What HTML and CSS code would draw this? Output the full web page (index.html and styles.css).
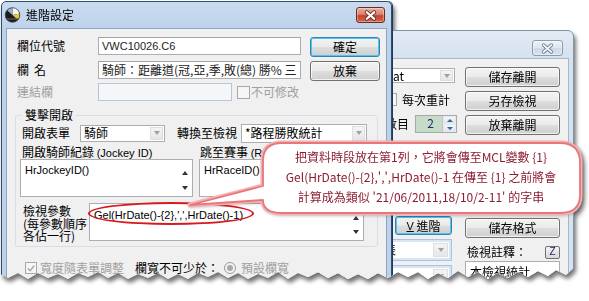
FILE: index.html
```html
<!DOCTYPE html>
<html lang="zh-Hant">
<head>
<meta charset="utf-8">
<title>進階設定</title>
<link rel="stylesheet" href="styles.css">
</head>
<body>
<div class="paper">
  <div class="desk">
    <div class="win back">
      <div class="titlebar back-title">
        <span class="close inactive">
          <svg width="30" height="15" viewBox="0 0 30 15"><path d="M11 4 L19 11 M19 4 L11 11" stroke="#6d7c8e" stroke-width="3.6" stroke-linecap="round"/><path d="M11 4 L19 11 M19 4 L11 11" stroke="#f4f7fb" stroke-width="2" stroke-linecap="round"/></svg>
        </span>
      </div>
      <div class="client back-client">
        <div class="bcol bleft">
          <div class="combo bcombo"><span class="ctext">at</span><span class="arrow"><i></i></span></div>
          <div class="bcheck"><span class="cbox"></span><span>每次重計</span></div>
          <div class="bspin"><span>數目</span><div class="spin"><span class="spinval">2</span><span class="spinbtns"><b class="up"></b><b class="dn"></b></span></div></div>
          <div class="btn vbtn"><u>V</u>&nbsp;進階</div>
          <div class="combo bcombo2"><span class="ctext">表</span><span class="arrow"><i></i></span></div>
          <div class="combo bcombo2"><span class="ctext"></span><span class="arrow"><i></i></span></div>
        </div>
        <div class="bcol bright">
          <div class="btn bbtn">儲存離開</div>
          <div class="btn bbtn">另存檢視</div>
          <div class="btn bbtn">放棄離開</div>
          <div class="btn bbtn fmt">儲存格式</div>
          <div class="noterow"><span>檢視註釋：</span><span class="zbtn">Z</span></div>
          <div class="textarea notearea"><span>本檢視統計</span><span class="sb"><i class="tri-up"></i></span></div>
        </div>
      </div>
    </div>

    <div class="win front">
      <div class="titlebar">
        <svg class="appicon" width="17" height="16" viewBox="0 0 17 16">
          <circle cx="8.5" cy="8" r="7.3" fill="#1c1c1c"/>
          <path d="M8.5 8 L8.5 0.7 A7.3 7.3 0 0 1 15.6 6.4 Z" fill="#f7f7f7"/>
          <path d="M8.5 8 L15.6 6.4 A7.3 7.3 0 0 1 13.8 13 Z" fill="#e8c43a"/>
          <path d="M8.5 8 L3 3.2 A7.3 7.3 0 0 1 8.5 0.7 Z" fill="#8fb6d8"/>
          <path d="M2 12 L15 12" stroke="#555" stroke-width="1.4"/>
          <circle cx="8.5" cy="8" r="7.3" fill="none" stroke="#444" stroke-width="0.8"/>
        </svg>
        <span class="ttext">進階設定</span>
        <span class="close">
          <svg width="28" height="15" viewBox="0 0 28 15"><path d="M10 4 L18 11 M18 4 L10 11" stroke="#4a1a12" stroke-width="3.8" stroke-linecap="round"/><path d="M10 4 L18 11 M18 4 L10 11" stroke="#ffffff" stroke-width="2.2" stroke-linecap="round"/></svg>
        </span>
      </div>
      <div class="client front-client">
        <div class="toparea">
          <div class="fields">
            <div class="row r1"><span class="lbl">欄位代號</span><div class="field wide lat">VWC10026.C6</div></div>
            <div class="row r2"><span class="lbl"><span class="gapch">欄</span>名</span><div class="field wide">騎師：距離道(冠,亞,季,敗(總) 勝% 三</div></div>
            <div class="row r3"><span class="lbl dis">連結欄</span><div class="field short disabled"></div><span class="cbox lcheck"></span><span class="dis">不可修改</span></div>
          </div>
          <div class="btncol">
            <div class="btn def">確定</div>
            <div class="btn">放棄</div>
          </div>
        </div>

        <div class="group">
          <span class="legend">雙擊開啟</span>
          <div class="grow ga">
            <span class="lbl2">開啟表單</span>
            <div class="combo c1"><span class="ctext">騎師</span><span class="arrow"><i></i></span></div>
            <span class="lbl3">轉換至檢視</span>
            <div class="combo c2"><span class="ctext">*路程勝敗統計</span><span class="arrow"><i></i></span></div>
          </div>
          <div class="grow gb">
            <span class="lbl4">開啟騎師紀錄 <span class="lat">(Jockey ID)</span></span>
            <span>跳至賽事 <span class="lat">(Race ID)</span></span>
          </div>
          <div class="grow gc">
            <div class="textarea ta1"><span class="lat">HrJockeyID()</span><span class="sb"><i class="tri-up"></i><i class="tri-dn"></i></span></div>
            <div class="textarea ta2"><span class="lat">HrRaceID()</span><span class="sb"><i class="tri-up"></i><i class="tri-dn"></i></span></div>
          </div>
          <div class="grow gd">
            <span class="plbl"><span>檢視參數</span><span>(每參數順序</span><span>各佔一行)</span></span>
            <div class="textarea ta3"><span class="lat">Gel(HrDate()-{2},',',HrDate()-1)</span><span class="sb"><i class="tri-up"></i><i class="tri-dn"></i></span></div>
          </div>
        </div>

        <div class="bottomrow">
          <span class="cbox checked"><svg width="11" height="11" viewBox="0 0 11 11"><path d="M2 5.5 L4.5 8 L9 2.5" stroke="#a8a8a8" stroke-width="1.6" fill="none"/></svg></span>
          <span class="dis wtext">寬度隨表單調整</span>
          <span class="minw">欄寬不可少於：</span>
          <span class="radio"><i></i></span>
          <span class="dis">預設欄寬</span>
        </div>
      </div>
    </div>

    <div class="ellipse"></div>

    <svg class="bubble" width="589" height="301" viewBox="0 0 589 301">
      <path d="M282 143 L560 143 Q580 143 580 163 L580 195 Q580 213 560 213 L282 213 Q263 213 263 200 L190 205 L263 186 L263 161 Q263 143 282 143 Z" fill="#ffffff" stroke="#f3b3b3" stroke-width="5" stroke-linejoin="round"/>
      <path d="M282 143 L560 143 Q580 143 580 163 L580 195 Q580 213 560 213 L282 213 Q263 213 263 200 L190 205 L263 186 L263 161 Q263 143 282 143 Z" fill="#ffffff" stroke="#e8777b" stroke-width="1.8" stroke-linejoin="round"/>
    </svg>
    <div class="bubble-text">
      <div>把資料時段放在第1列，它將會傳至MCL變數 {1}</div>
      <div>Gel(HrDate()-{2},',',HrDate()-1 在傳至 {1} 之前將會</div>
      <div>計算成為類似 '21/06/2011,18/10/2-11' 的字串</div>
    </div>
  </div>
</div>
</body>
</html>
```

FILE: styles.css
```css
* { box-sizing: border-box; }
html, body { margin: 0; padding: 0; background: #ffffff; }
body {
  width: 589px; height: 301px; overflow: hidden;
  font-family: "Noto Sans CJK TC", "Liberation Sans", sans-serif;
  font-size: 12px; line-height: 14px; color: #000;
}
.lat { font-family: "Liberation Sans", "Noto Sans CJK TC", sans-serif; font-size: 11px; }
.paper { width: 589px; height: 301px; filter: drop-shadow(2px 4px 2px rgba(0,0,0,0.55)); }
.desk {
  position: relative; width: 589px; height: 301px;
  clip-path: polygon(0 0, 589px 0, 589px 268px, 582px 272px, 574px 268px, 566px 275px, 556px 270px, 548px 276px, 538px 271px, 528px 277px, 518px 272px, 508px 278px, 497px 273px, 488px 279px, 478px 272px, 468px 277px, 458px 271px, 448px 278px, 438px 273px, 428px 279px, 418px 272px, 408px 277px, 398px 272px, 388px 278px, 378px 273px, 368px 279px, 358px 274px, 348px 279px, 338px 273px, 328px 278px, 318px 272px, 308px 277px, 298px 273px, 288px 279px, 278px 272px, 268px 278px, 258px 274px, 248px 279px, 238px 273px, 228px 278px, 218px 272px, 208px 277px, 198px 273px, 188px 279px, 178px 274px, 168px 279px, 158px 273px, 148px 278px, 138px 274px, 128px 279px, 118px 273px, 108px 278px, 98px 272px, 88px 277px, 78px 273px, 68px 279px, 58px 274px, 48px 278px, 38px 273px, 28px 279px, 18px 273px, 8px 278px, 0 274px);
}

/* windows */
.win { position: absolute; border: 1px solid #2f4d70; display: flex; flex-direction: column; }
.front {
  left: 1px; top: 1px; width: 391px; height: 300px;
  background: linear-gradient(#c9dbef, #bcd1ea 30px, #bed2ea);
  border-radius: 5px 5px 0 0;
  box-shadow: 1px 0 0 #1e3a5c;
}
.back {
  left: 300px; top: 30px; width: 274px; height: 290px;
  background: linear-gradient(#e2eaf4, #d5e1ef 30px, #d8e3f0);
  border-color: #8093aa;
  border-radius: 6px 6px 0 0;
}
.titlebar { height: 26px; display: flex; align-items: center; flex: none; }
.back-title { height: 27px; align-items: flex-start; }
.appicon { margin-left: 2px; flex: none; }
.ttext { margin-left: 5px; font-size: 12px; }
.close {
  margin-left: auto; margin-right: 6px; width: 29px; height: 16px; flex: none;
  border: 1px solid #6b2a22; border-radius: 3px;
  background: linear-gradient(#eab0a2, #d9826f 45%, #c5422c 55%, #d5674f);
  display: flex; align-items: center; justify-content: center;
  box-shadow: inset 0 0 0 1px rgba(255,255,255,0.35);
}
.close.inactive {
  margin-right: 10px; margin-top: 9px; width: 31px; height: 16px;
  border-color: #8c9bb0;
  background: linear-gradient(#eef2f8, #dde5ef 50%, #cfd9e6 51%, #d9e2ed);
}
.client { background: #f0f0f0; border: 1px solid #8fa6c2; flex: 1; }
.front-client { margin: 0 4px 0 4px; padding: 8px 6px 0 10px; }
.back-client { margin: 0 4px 0 4px; border-color: #a7b7ca; display: flex; padding-right: 7px; }

/* top area */
.toparea { display: flex; }
.fields { width: 284px; }
.row { display: flex; align-items: center; height: 18px; }
.r2 { margin-top: 6px; }
.r3 { margin-top: 4px; }
.lbl { width: 81px; flex: none; }
.gapch { margin-right: 5px; }
.dis { color: #a0a0a0; }
.field {
  height: 18px; background: #fff; border: 1px solid #abadb3;
  border-top-color: #a3a6ad; padding: 1px 3px; white-space: nowrap; overflow: hidden;
  display: flex; align-items: center; color: #222;
}
.field.wide { width: 203px; }
.field.short { width: 134px; }
.field.disabled { background: #f4f6f8; border-color: #b5c6da; }
.cbox {
  width: 13px; height: 13px; border: 1px solid #a8a8a8; background: #f6f6f6;
  display: inline-flex; align-items: center; justify-content: center; flex: none;
}
.lcheck { margin-left: 5px; margin-right: 1px; }
.btncol { margin-left: 9px; display: flex; flex-direction: column; gap: 4px; }
.btn {
  height: 20px; border: 1px solid #707070; border-radius: 3px;
  background: linear-gradient(#f3f3f3, #ebebeb 48%, #dddddd 52%, #cfcfcf);
  box-shadow: inset 0 0 0 1px rgba(255,255,255,0.7);
  display: flex; align-items: center; justify-content: center; flex: none;
}
.btncol .btn { width: 70px; }
.btn.def { border-color: #3c7fb1; box-shadow: inset 0 0 0 1px #48c8f4; }

/* group */
.group {
  margin: 14px 0 0 -2px; width: 363px; height: 132px;
  border: 1px solid #d5dfe5; border-radius: 3px; padding: 0 0 0 4px;
}
.legend { display: block; width: max-content; margin: -8px 0 0 2px; padding: 0 3px; background: #f0f0f0; height: 14px; }
.grow { display: flex; }
.ga { align-items: center; height: 20px; margin-top: 1px; padding-left: 2px; }
.lbl2 { width: 58px; flex: none; }
.lbl3 { margin-left: 12px; width: 64px; flex: none; }
.combo {
  background: #fff; border: 1px solid #abadb3; display: flex; align-items: center;
  white-space: nowrap; overflow: hidden;
}
.ctext { flex: 1; padding-left: 3px; }
.arrow {
  width: 13px; align-self: stretch; margin: 1px; display: flex; align-items: center; justify-content: center;
  background: linear-gradient(#f4f4f4, #e6e6e6); border: 1px solid #dedede;
}
.arrow i { width: 0; height: 0; border-left: 3.5px solid transparent; border-right: 3.5px solid transparent; border-top: 4px solid #a0a0a0; }
.c1 { width: 85px; height: 17px; }
.c2 { width: 126px; height: 19px; }
.gb { height: 14px; margin-top: 2px; padding-left: 2px; }
.lbl4 { width: 178px; flex: none; }
.gc { gap: 6px; }
.textarea {
  background: #fff; border: 1px solid #abadb3; display: flex; justify-content: space-between;
  padding: 3px 0 0 4px; overflow: hidden;
}
.textarea > span:first-child { white-space: nowrap; line-height: 14px; }
.sb { width: 14px; display: flex; flex-direction: column; align-items: center; justify-content: space-between; padding: 8px 0 6px; flex: none; }
.tri-up, .tri-dn { width: 0; height: 0; border-left: 3px solid transparent; border-right: 3px solid transparent; }
.tri-up { border-bottom: 4px solid #333; }
.tri-dn { border-top: 4px solid #333; }
.ta1 { width: 173px; height: 38px; }
.ta2 { width: 168px; height: 38px; }
.gd { margin-top: 6px; }
.plbl { width: 69px; flex: none; padding-left: 3px; padding-top: 2px; display: flex; flex-direction: column; gap: 0; }
.plbl span { height: 12.5px; line-height: 12px; white-space: nowrap; }
.ta3 { width: 275px; height: 38px; padding-top: 4px; }

/* bottom row */
.bottomrow { display: flex; align-items: center; height: 14px; margin-top: 14px; padding-left: 8px; }
.bottomrow .cbox { width: 12px; height: 12px; }
.wtext { margin-left: 3px; }
.minw { margin-left: 11px; }
.radio {
  width: 12px; height: 12px; border: 1px solid #9a9a9a; border-radius: 50%; margin: 0 5px 0 5px;
  display: inline-flex; align-items: center; justify-content: center; background: #f4f4f4;
}
.radio i { width: 6px; height: 6px; border-radius: 50%; background: #a9a9a9; }

/* back window */
.bcol { display: flex; flex-direction: column; flex: none; }
.bleft { width: 151px; }
.bright { width: 95px; margin-left: 8px; }
.bcombo { height: 15px; width: 149px; margin-top: 9px; }
.bcombo .ctext { padding-left: 86px; }
.bcheck { display: flex; align-items: center; height: 13px; margin-top: 10px; padding-left: 78px; gap: 5px; }
.bspin { display: flex; align-items: center; justify-content: flex-end; height: 18px; margin-top: 9px; gap: 6px; }
.spin { width: 42px; height: 18px; border: 1px solid #a8a8a8; background: #c6dbc8; display: flex; }
.spinval { flex: 1; text-align: center; color: #1e2a5a; padding-left: 3px; }
.spinbtns { width: 14px; display: flex; flex-direction: column; border-left: 1px solid #c3c3c3; }
.spinbtns b { flex: 1; background: linear-gradient(#f4f6f8, #dfe5ea); border: 1px solid #e6e9ed; display: flex; align-items: center; justify-content: center; }
.spinbtns .up::after { content: ""; border-left: 3px solid transparent; border-right: 3px solid transparent; border-bottom: 3px solid #3d6590; }
.spinbtns .dn::after { content: ""; border-left: 3px solid transparent; border-right: 3px solid transparent; border-top: 3px solid #3d6590; }
.vbtn { width: 57px; height: 19px; margin: 83px 0 0 89px; border-color: #3c7fb1; box-shadow: inset 0 0 0 1px #48c8f4; }
.vbtn u { font-family: "Liberation Sans", sans-serif; font-size: 11px; }
.bcombo2 { width: 146px; height: 22px; margin-top: 4px; border: 1px solid #a9c4e2; box-shadow: inset 0 0 0 2px #d6e6f6; }
.bcombo2 .ctext { padding-left: 77px; }
.bcombo2 .arrow { width: 15px; margin: 3px; }
.bbtn { width: 95px; height: 20px; margin-top: 4px; }
.bbtn:first-child { margin-top: 8px; }
.bbtn.fmt { margin-top: 83px; }
.noterow { display: flex; align-items: center; justify-content: space-between; height: 14px; margin-top: 7px; padding-left: 2px; }
.zbtn {
  width: 15px; height: 13px; border: 1px solid #707070; border-radius: 2px; font-family: "Liberation Sans", sans-serif; font-size: 10px;
  display: flex; align-items: center; justify-content: center; background: linear-gradient(#f3f3f3, #d8d8d8); color: #1b2466;
}
.notearea { height: 40px; margin-top: 2px; padding-top: 3px; }

/* overlays */
.ellipse {
  position: absolute; left: 88px; top: 202px; width: 166px; height: 23px;
  border: 2px solid #d81a1f; border-radius: 50%;
}
.bubble { position: absolute; left: 0; top: 0; filter: drop-shadow(1px 1px 1px rgba(0,0,0,0.18)); }
.bubble-text {
  position: absolute; left: 262px; top: 147px; width: 318px; text-align: center;
  color: #8d1d33; line-height: 20px; font-size: 12px; white-space: nowrap;
}
```
